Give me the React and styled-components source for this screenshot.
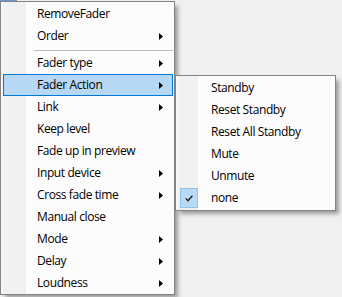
import styled, { createGlobalStyle } from 'styled-components';

const GlobalStyle = createGlobalStyle`
    html, body {
        margin: 0;
        padding: 0;
        background: #f0f0f0;
        font-family: "Open Sans", "Noto Sans", sans-serif;
    }
`;

const Screen = styled.div`
    width: 342px;
    height: 297px;
    overflow: hidden;
    display: flex;
    flex-direction: column;
`;

const TopStrip = styled.div`
    width: 17px;
    height: 1px;
    background: #6b93d8;
`;

const MenuRow = styled.div`
    display: flex;
    align-items: flex-start;
`;

const Menu = styled.div`
    position: relative;
    z-index: ${p => p.$level};
    width: ${p => p.$width}px;
    box-sizing: border-box;
    margin-top: ${p => p.$top || 0}px;
    padding: 1px 0 ${p => p.$bottomPad}px 0;
    border: 1px solid #838383;
    background:
        linear-gradient(to right, #fbfbfb, #f1f1f1 3px, #f1f1f1) 0 0 / ${p => p.$gutter}px 100% no-repeat,
        #fcfcfc;
    box-shadow: 4px 4px 4px -1px rgba(0, 0, 0, 0.35);
    display: flex;
    flex-direction: column;
`;

const Item = styled.div`
    height: 22px;
    box-sizing: border-box;
    margin: 0 1px 0 2px;
    border: 1px solid ${p => p.$active ? '#0078d7' : 'transparent'};
    background: ${p => p.$active ? '#b7d8f4' : 'transparent'};
    display: flex;
    align-items: center;
    font-size: 12px;
    letter-spacing: -0.4px;
    color: #000;
    white-space: nowrap;
`;

const Gutter = styled.div`
    width: ${p => p.$width}px;
    height: 100%;
    flex-shrink: 0;
    display: flex;
    align-items: center;
`;

const Label = styled.span`
    flex: 1;
    line-height: 20px;
`;

const Arrow = styled.svg`
    width: 4px;
    height: 7px;
    margin-right: 9px;
    flex-shrink: 0;
`;

const CheckBox = styled.div`
    width: 16px;
    height: 18px;
    margin-left: 1px;
    border: 1px solid #8fc2ee;
    background: #b9d9f5;
    display: flex;
    align-items: center;
    justify-content: center;
`;

const Separator = styled.div`
    height: 1px;
    margin: 3px 1px 1px 33px;
    background: #bdbdbd;
`;

const mainItems = [
    { label: 'RemoveFader' },
    { label: 'Order', sub: true },
    { sep: true },
    { label: 'Fader type', sub: true },
    { label: 'Fader Action', sub: true, active: true },
    { label: 'Link', sub: true },
    { label: 'Keep level' },
    { label: 'Fade up in preview' },
    { label: 'Input device', sub: true },
    { label: 'Cross fade time', sub: true },
    { label: 'Manual close' },
    { label: 'Mode', sub: true },
    { label: 'Delay', sub: true },
    { label: 'Loudness', sub: true },
];

const actionItems = [
    { label: 'Standby' },
    { label: 'Reset Standby' },
    { label: 'Reset All Standby' },
    { label: 'Mute' },
    { label: 'Unmute' },
    { label: 'none', checked: true },
];

function SubArrow() {
    return (
        <Arrow viewBox="0 0 4 7">
            <polygon points="0,0 4,3.5 0,7" fill="#000" />
        </Arrow>
    );
}

function Check() {
    return (
        <svg width="8" height="7" viewBox="0 0 8 7">
            <polyline points="0.8,3.4 3,5.8 7.4,0.8" fill="none" stroke="#1a1a1a" strokeWidth="1.3" />
        </svg>
    );
}

export default function App() {
    return (
        <Screen>
            <GlobalStyle />
            <TopStrip />
            <MenuRow>
                <Menu $level={1} $width={175} $gutter={25} $bottomPad={0}>
                    {mainItems.map((it, i) => it.sep
                        ? <Separator key={i} />
                        : <Item key={i} $active={it.active}>
                            <Gutter $width={33} />
                            <Label>{it.label}</Label>
                            {it.sub && <SubArrow />}
                        </Item>
                    )}
                </Menu>
                <Menu $level={2} $width={161} $top={74} $gutter={22} $bottomPad={1}>
                    {actionItems.map((it, i) => (
                        <Item key={i}>
                            <Gutter $width={32}>
                                {it.checked && <CheckBox><Check /></CheckBox>}
                            </Gutter>
                            <Label>{it.label}</Label>
                        </Item>
                    ))}
                </Menu>
            </MenuRow>
        </Screen>
    );
}
